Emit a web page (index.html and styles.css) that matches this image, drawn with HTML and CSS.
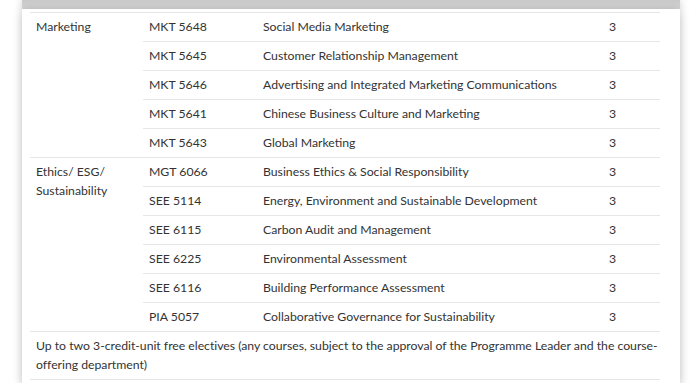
FILE: index.html
```html
<!DOCTYPE html>
<html lang="en">
<head>
<meta charset="utf-8">
<link rel="stylesheet" href="styles.css">
</head>
<body>
<div class="page">
  <div class="topband"></div>
  <div class="card">
    <table class="courses">
      <colgroup>
        <col class="c-cat"><col class="c-code"><col class="c-title"><col class="c-cr">
      </colgroup>
      <tbody>
        <tr>
          <td class="cat" rowspan="5">Marketing</td>
          <td>MKT 5648</td><td>Social Media Marketing</td><td>3</td>
        </tr>
        <tr><td>MKT 5645</td><td>Customer Relationship Management</td><td>3</td></tr>
        <tr><td>MKT 5646</td><td>Advertising and Integrated Marketing Communications</td><td>3</td></tr>
        <tr><td>MKT 5641</td><td>Chinese Business Culture and Marketing</td><td>3</td></tr>
        <tr><td>MKT 5643</td><td>Global Marketing</td><td>3</td></tr>
        <tr>
          <td class="cat" rowspan="6">Ethics/ ESG/ Sustainability</td>
          <td>MGT 6066</td><td>Business Ethics &amp; Social Responsibility</td><td>3</td>
        </tr>
        <tr><td>SEE 5114</td><td>Energy, Environment and Sustainable Development</td><td>3</td></tr>
        <tr><td>SEE 6115</td><td>Carbon Audit and Management</td><td>3</td></tr>
        <tr><td>SEE 6225</td><td>Environmental Assessment</td><td>3</td></tr>
        <tr><td>SEE 6116</td><td>Building Performance Assessment</td><td>3</td></tr>
        <tr><td>PIA 5057</td><td>Collaborative Governance for Sustainability</td><td>3</td></tr>
        <tr class="last">
          <td colspan="4">Up to two 3-credit-unit free electives (any courses, subject to the approval of the Programme Leader and the course-offering department)</td>
        </tr>
      </tbody>
    </table>
  </div>
</div>
</body>
</html>
```
FILE: styles.css
```css
html, body {
  margin: 0;
  padding: 0;
  background: #ffffff;
}
body {
  font-family: Lato, "Liberation Sans", sans-serif;
  font-size: 12.25px;
  color: #333333;
}
.page {
  width: 658px;
  margin-left: 22px;
}
.topband {
  height: 9px;
  background: linear-gradient(#c9c9c9, #d6d6d6);
  box-shadow: 0 0 8px rgba(0, 0, 0, 0.22);
}
.card {
  background: #ffffff;
  padding: 3px 20px 3px 8px;
  box-shadow: 0 2px 9px rgba(0, 0, 0, 0.28);
}
.courses {
  width: 630px;
  border-collapse: collapse;
  table-layout: fixed;
}
.c-cat { width: 113px; }
.c-code { width: 114px; }
.c-title { width: 346px; }
.c-cr { width: 57px; }
.courses td {
  border-top: 1px solid #e6e6e6;
  padding: 4px 6px 5px;
  line-height: 19px;
  vertical-align: top;
}
.courses tr.last td {
  padding-right: 0;
  letter-spacing: -0.02px;
  border-bottom: 1px solid #e6e6e6;
}
```
